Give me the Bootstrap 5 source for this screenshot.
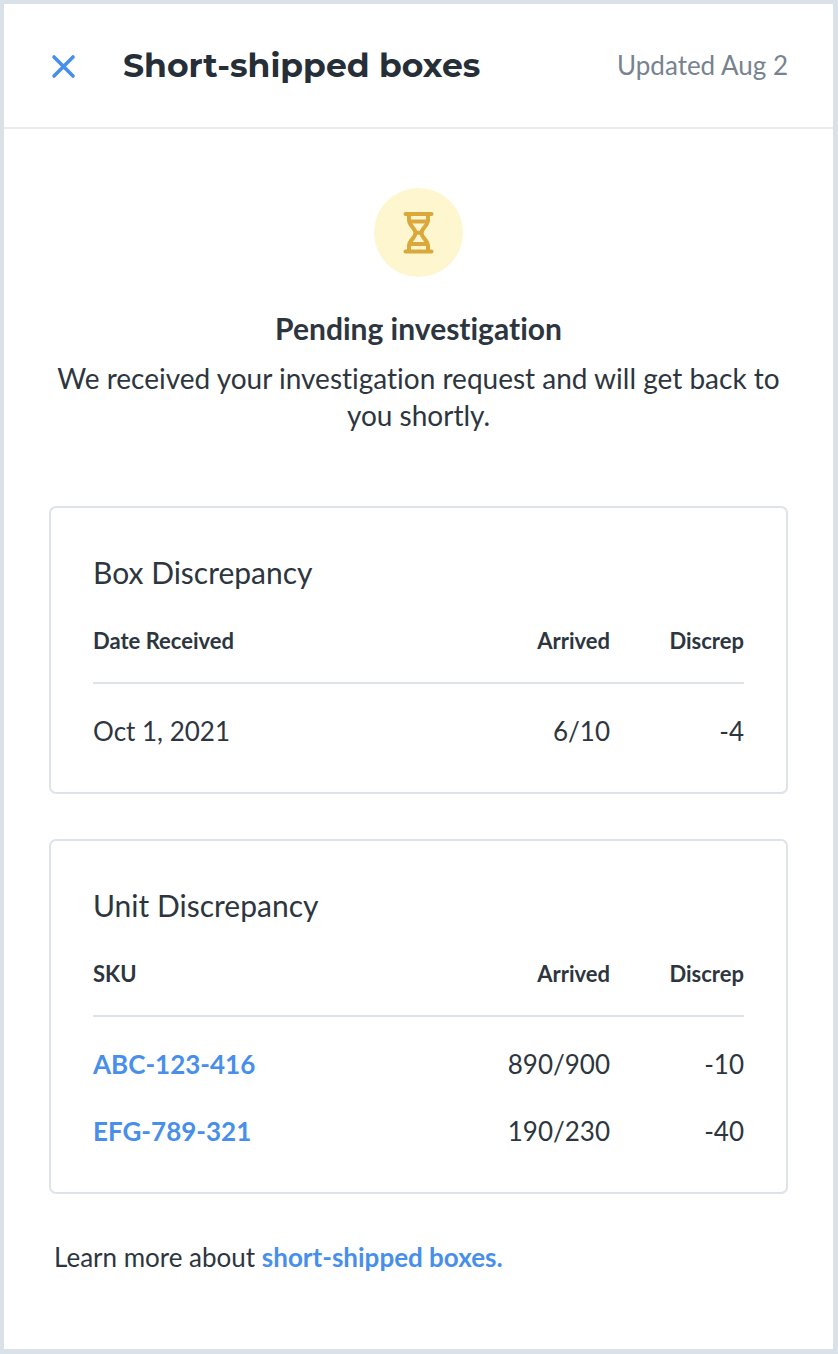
<!DOCTYPE html>
<html lang="en">
<head>
<meta charset="utf-8">
<meta name="viewport" content="width=device-width, initial-scale=1">
<title>Short-shipped boxes</title>
<link href="https://cdn.jsdelivr.net/npm/bootstrap@5.3.0/dist/css/bootstrap.min.css" rel="stylesheet">
<style>
  :root { --ink: #2d363f; --line: #dee3ea; --blue: #478feb; }
  body { font-family: Lato, "Liberation Sans", sans-serif; font-size: 26px; line-height: 37px; font-variant-ligatures: none; color: var(--ink); background: #fff; }
  a { color: var(--blue); }
  .panel { border: 5px solid #dbe1e8; border-top-width: 4px; border-left-width: 4px; }
  .panel-head { padding: 40px 45px; border-bottom: 2px solid #e9edf1; }
  .panel-title { font-family: Montserrat, Inter, sans-serif; font-size: 33px; line-height: 43px; font-weight: 700; color: #262f38; }
  .close-btn { width: 28px; height: 28px; color: var(--blue); margin-right: 46px; }
  .updated { color: #77838f; }
  .panel-main { padding: 59px 45px 72px; }
  .status-icon { width: 89px; height: 89px; background: #fdf6cf; margin-bottom: 32px; }
  .status-title { font-size: 30px; line-height: 38px; font-weight: 700; margin-bottom: 13px; }
  .status-text { font-size: 28px; margin-bottom: 72px; }
  .box-card { border: 2px solid var(--line); border-radius: 7px; padding: 45px 42px 27px; margin-bottom: 45px; }
  .box-title { font-size: 30px; line-height: 38px; font-weight: 400; }
  .box-table th, .box-table td { padding: 15px 0; }
  .box-table thead th { font-size: 22px; line-height: 28px; padding: 36px 0 27px; border-bottom: 2px solid var(--line); }
  .box-table tbody tr:first-child td { padding-top: 29px; }
  .num-col { width: 134px; }
  .more { padding-left: 5px; }
</style>
</head>
<body>
<div class="panel min-vh-100">
  <header class="panel-head d-flex align-items-center">
    <button type="button" class="close-btn btn p-0 border-0 d-flex flex-shrink-0" aria-label="Close">
      <svg width="28" height="28" viewBox="0 0 28 28" fill="none" stroke="currentColor" stroke-width="3.6" stroke-linecap="round" aria-hidden="true"><path d="M5 5 24 24M24 5 5 24"/></svg>
    </button>
    <h1 class="panel-title mb-0">Short-shipped boxes</h1>
    <span class="updated ms-auto text-nowrap">Updated Aug 2</span>
  </header>
  <main class="panel-main">
    <section class="text-center">
      <div class="status-icon rounded-circle d-flex align-items-center justify-content-center mx-auto">
        <svg width="32" height="44" viewBox="0 0 32 44" fill="none" stroke="#dba83c" stroke-width="4" stroke-linecap="round" stroke-linejoin="round" aria-hidden="true">
          <path d="M2.500 3H28.500M2.500 40.500H28.500"/>
          <path d="M6 4V9C6 15 12.500 17 12.500 22S6 29 6 35V40M25 4V9C25 15 18.500 17 18.500 22S25 29 25 35V40"/>
          <path d="M7 10.500H24M7 33H24M12.500 21.800H18.500"/>
        </svg>
      </div>
      <h2 class="status-title">Pending investigation</h2>
      <p class="status-text">We received your investigation request and will get back to you shortly.</p>
    </section>
    <section class="box-card">
      <h2 class="box-title mb-0" id="boxes">Box Discrepancy</h2>
      <table class="box-table w-100" aria-labelledby="boxes">
        <thead><tr><th scope="col">Date Received</th><th scope="col" class="text-end">Arrived</th><th scope="col" class="num-col text-end">Discrep</th></tr></thead>
        <tbody><tr><td>Oct 1, 2021</td><td class="text-end">6/10</td><td class="text-end">-4</td></tr></tbody>
      </table>
    </section>
    <section class="box-card">
      <h2 class="box-title mb-0" id="units">Unit Discrepancy</h2>
      <table class="box-table w-100" aria-labelledby="units">
        <thead><tr><th scope="col">SKU</th><th scope="col" class="text-end">Arrived</th><th scope="col" class="num-col text-end">Discrep</th></tr></thead>
        <tbody>
          <tr><td><a href="#" class="fw-bold text-decoration-none">ABC-123-416</a></td><td class="text-end">890/900</td><td class="text-end">-10</td></tr>
          <tr><td><a href="#" class="fw-bold text-decoration-none">EFG-789-321</a></td><td class="text-end">190/230</td><td class="text-end">-40</td></tr>
        </tbody>
      </table>
    </section>
    <p class="more mb-0">Learn more about <a href="#" class="fw-bold text-decoration-none">short-shipped boxes.</a></p>
  </main>
</div>
<script src="https://cdn.jsdelivr.net/npm/bootstrap@5.3.0/dist/js/bootstrap.bundle.min.js"></script>
</body>
</html>
